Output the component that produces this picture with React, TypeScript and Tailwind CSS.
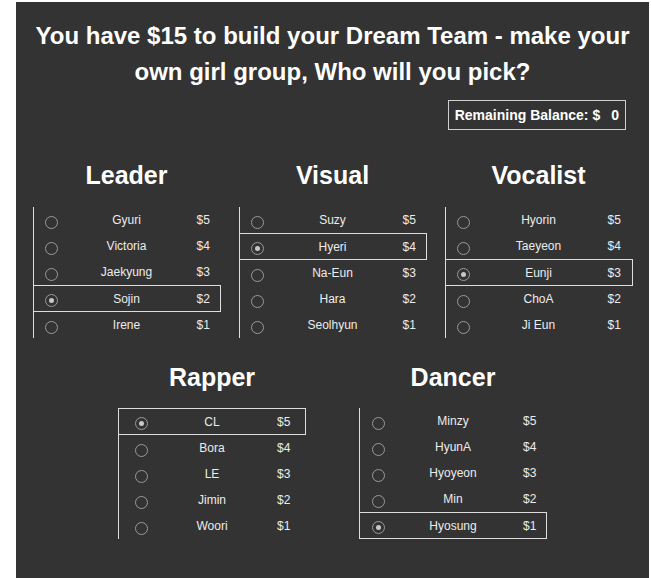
import React from "react";

type Member = { name: string; price: number };
type Group = {
  title: string;
  members: Member[];
  selected: number;
  grid: string;
  pricePad: string;
};

const groups: Group[] = [
  {
    title: "Leader",
    members: [
      { name: "Gyuri", price: 5 },
      { name: "Victoria", price: 4 },
      { name: "Jaekyung", price: 3 },
      { name: "Sojin", price: 2 },
      { name: "Irene", price: 1 },
    ],
    selected: 3,
    grid: "grid-cols-[35px_116px_1fr]",
    pricePad: "pl-[12px]",
  },
  {
    title: "Visual",
    members: [
      { name: "Suzy", price: 5 },
      { name: "Hyeri", price: 4 },
      { name: "Na-Eun", price: 3 },
      { name: "Hara", price: 2 },
      { name: "Seolhyun", price: 1 },
    ],
    selected: 1,
    grid: "grid-cols-[35px_116px_1fr]",
    pricePad: "pl-[12px]",
  },
  {
    title: "Vocalist",
    members: [
      { name: "Hyorin", price: 5 },
      { name: "Taeyeon", price: 4 },
      { name: "Eunji", price: 3 },
      { name: "ChoA", price: 2 },
      { name: "Ji Eun", price: 1 },
    ],
    selected: 2,
    grid: "grid-cols-[36px_114px_1fr]",
    pricePad: "pl-[12px]",
  },
  {
    title: "Rapper",
    members: [
      { name: "CL", price: 5 },
      { name: "Bora", price: 4 },
      { name: "LE", price: 3 },
      { name: "Jimin", price: 2 },
      { name: "Woori", price: 1 },
    ],
    selected: 0,
    grid: "grid-cols-[44px_98px_1fr]",
    pricePad: "pl-[16px]",
  },
  {
    title: "Dancer",
    members: [
      { name: "Minzy", price: 5 },
      { name: "HyunA", price: 4 },
      { name: "Hyoyeon", price: 3 },
      { name: "Min", price: 2 },
      { name: "Hyosung", price: 1 },
    ],
    selected: 4,
    grid: "grid-cols-[37px_112px_1fr]",
    pricePad: "pl-[14px]",
  },
];

function Radio({ on }: { on: boolean }) {
  return (
    <div className="flex items-center justify-center">
      <div className="w-[13px] h-[13px] rounded-full border border-[#9a9a9a] flex items-center justify-center translate-y-[2px]">
        {on && <div className="w-[5px] h-[5px] rounded-full bg-[#c8c8c8]" />}
      </div>
    </div>
  );
}

function Section({ g, headerGap }: { g: Group; headerGap: string }) {
  return (
    <div className="w-[188px]">
      <div className={`h-[32px] text-[25px] leading-[32px] font-bold text-white text-center ${headerGap}`}>
        {g.title}
      </div>
      <div>
        {g.members.map((m, i) => {
          const on = i === g.selected;
          return (
            <div
              key={m.name}
              className={`grid ${g.grid} items-center border-l border-[#dedede] ${
                on ? "h-[27px] border-t border-r border-b" : "h-[26px]"
              }`}
            >
              <Radio on={on} />
              <div className="text-center text-[12px] text-[#ececec]">{m.name}</div>
              <div className={`${g.pricePad} text-[12px] text-[#ececec]`}>${m.price}</div>
            </div>
          );
        })}
      </div>
    </div>
  );
}

export default function App() {
  return (
    <div
      className="bg-white min-h-screen pt-[2px] pl-[16px]"
      style={{ fontFamily: '"Liberation Sans", Arial, sans-serif' }}
    >
      <div className="bg-[#333333] w-[633px] h-[576px] pt-[16px]">
        <h1 className="text-center text-[24px] leading-[36px] font-bold text-white">
          You have $15 to build your Dream Team - make your
          <br />
          own girl group, Who will you pick?
        </h1>
        <div className="flex justify-end pr-[23px] mt-[10px]">
          <div className="border border-[#cfcfcf] h-[30px] px-[6px] flex items-center text-[14px] font-bold text-white">
            <span>Remaining Balance: $</span>
            <span className="pl-[11px]">0</span>
          </div>
        </div>
        <div className="flex justify-center gap-[18px] mt-[29px]">
          {groups.slice(0, 3).map((g) => (
            <Section key={g.title} g={g} headerGap="mb-[16px]" />
          ))}
        </div>
        <div className="flex justify-center gap-[53px] mt-[23px]">
          {groups.slice(3).map((g) => (
            <Section key={g.title} g={g} headerGap="mb-[15px]" />
          ))}
        </div>
      </div>
    </div>
  );
}
